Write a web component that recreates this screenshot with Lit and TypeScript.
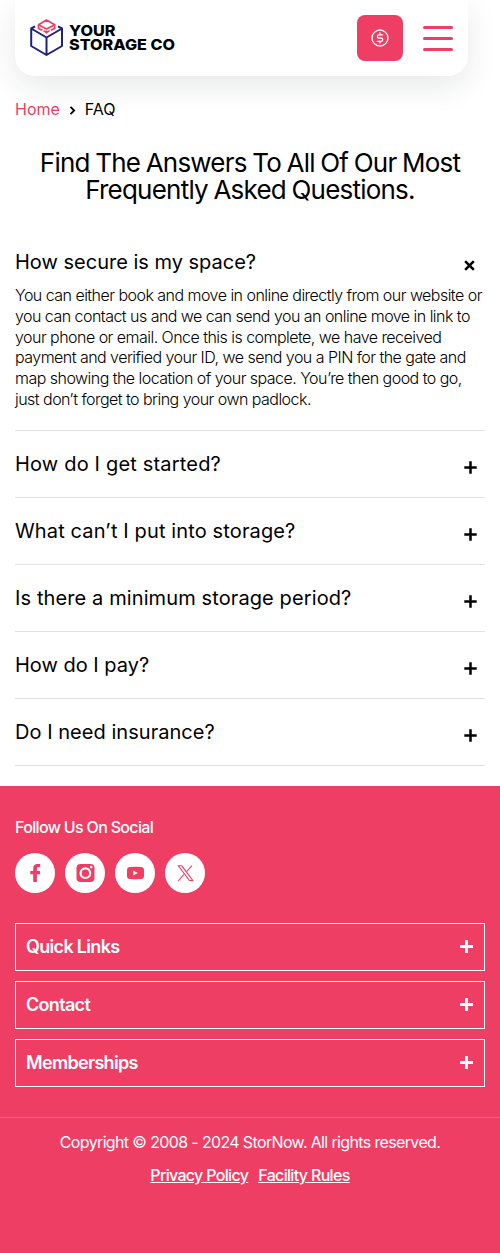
import { LitElement, html, css, svg } from "lit";
import { customElement, state } from "lit/decorators.js";
import { classMap } from "lit/directives/class-map.js";
import { styleMap } from "lit/directives/style-map.js";

const faqs = [
  {
    q: "How secure is my space?",
    tracking: 0,
    a: "You can either book and move in online directly from our website or you can contact us and we can send you an online move in link to your phone or email. Once this is complete, we have received payment and verified your ID, we send you a PIN for the gate and map showing the location of your space. You’re then good to go, just don’t forget to bring your own padlock.",
  },
  { q: "How do I get started?", tracking: 0.18, a: "" },
  { q: "What can’t I put into storage?", tracking: 0.13, a: "" },
  { q: "Is there a minimum storage period?", tracking: 0.11, a: "" },
  { q: "How do I pay?", tracking: 0, a: "" },
  { q: "Do I need insurance?", tracking: 0.04, a: "" },
];

const socials = [
  svg`<path d="M18.200 29v-7.700h-2.900v-3.300h2.900v-2.600c0-2.800 1.400-4.400 4-4.400h3v3.300h-1.800c-1 0-1.500.5-1.500 1.400v2.300h3.200v3.300h-3.200V29z"/>`,
  svg`<path d="M15.500 11h10a4 4 0 0 1 4 4v10a4 4 0 0 1-4 4h-10a4 4 0 0 1-4-4v-10a4 4 0 0 1 4-4z"/><circle cx="20.400" cy="20.200" r="4.800" fill="none" stroke="#fff" stroke-width="2.200"/><circle cx="26.200" cy="14.100" r="1.300" fill="#fff"/>`,
  svg`<path fill-rule="evenodd" d="M15 14q5.500-.6 11 0 3 .2 3 3v6q0 2.800-3 3-5.500.6-11 0-3-.2-3-3v-6q0-2.800 3-3zM18.300 17.500v5l4.400-2.500z"/>`,
  svg`<g fill="none" stroke="currentColor" stroke-width="1.1"><path d="M13.400 12.800h3.400l11 14.700h-3.400z"/><path d="M27 12.600l-5.500 6M13.300 27.800l6-6.800"/></g>`,
];

@customElement("app-root")
export class AppRoot extends LitElement {
  @state() private open = 0;

  static styles = css`
    :host {
      display: flex;
      flex-direction: column;
      min-height: 1253px;
      background: #fff;
      color: #000;
      font-family: Inter, sans-serif;
      overflow: hidden;
    }
    header {
      display: flex;
      align-items: center;
      box-sizing: border-box;
      width: 453px;
      height: 76px;
      margin-left: 15px;
      padding: 0 15px;
      background: #fff;
      border-radius: 0 0 20px 20px;
      box-shadow: 0 10px 30px rgba(29, 37, 45, 0.1);
    }
    .logo { display: block; margin-right: auto; }
    .price {
      display: grid;
      place-items: center;
      width: 46px;
      height: 46px;
      border-radius: 8px;
      background: #ef3e64;
    }
    .burger { display: grid; gap: 8px; width: 30px; margin-left: 20px; }
    .burger i { height: 3px; border-radius: 2px; background: #ef3e64; }
    nav {
      display: flex;
      align-items: center;
      height: 24px;
      padding: 21px 15px 0;
      font-size: 16px;
      line-height: 24px;
    }
    nav a { color: #ef3e64; }
    nav svg { margin: 2px 9px 0 9px; }
    h1 {
      margin: 28px 15px 0;
      font-size: 26px;
      font-weight: 400;
      line-height: 27px;
      letter-spacing: -0.78px;
      word-spacing: -1px;
      text-align: center;
    }
    .faqs { margin: 28px 15px 0; }
    .item { border-bottom: 1px solid #e2e2e2; }
    .q {
      display: flex;
      align-items: center;
      justify-content: space-between;
      height: 66px;
      font-size: 20px;
      cursor: pointer;
    }
    .q svg { margin: 8px 8px 0 0; }
    .open .q { height: 54px; padding-top: 7px; box-sizing: border-box; }
    .open .q svg { transform: rotate(45deg); margin-right: 9px; }
    .a {
      margin: 0;
      padding: 0 0 20px;
      font-size: 16px;
      font-weight: 300;
      line-height: 20.8px;
      letter-spacing: -0.53px;
    }
    footer { flex: 1; margin-top: 20px; background: #ef3e64; color: #fff; }
    .main { padding: 29px 15px 30px; }
    .follow { font-size: 16px; font-weight: 500; line-height: 24px; letter-spacing: -0.67px; }
    .social { display: flex; gap: 10px; margin: 14px 0 30px; }
    .social a {
      width: 40px;
      height: 40px;
      border-radius: 50%;
      background: #fff;
      color: #ef3e64;
    }
    .panels { display: grid; gap: 10px; }
    .panel {
      display: flex;
      align-items: center;
      justify-content: space-between;
      box-sizing: border-box;
      height: 48px;
      padding: 0 11px 0 10px;
      border: 1px solid #fff;
      font-size: 18px;
      font-weight: 600;
      letter-spacing: -0.68px;
    }
    .legal {
      border-top: 1px solid #f3607f;
      padding-top: 12px;
      text-align: center;
      font-size: 16px;
      line-height: 24px;
      letter-spacing: -0.64px;
    }
    .links {
      display: flex;
      justify-content: center;
      gap: 10px;
      margin-top: 9px;
      font-weight: 500;
      letter-spacing: -0.67px;
      text-decoration: underline;
    }
    svg { display: block; }
  `;

  render() {
    return html`
      <header>
        <svg class="logo" width="148" height="40" viewBox="0 0 148 40">
          <g fill="none" stroke-width="2" stroke-linejoin="round">
            <path stroke="#20207f" d="M5 8.400L1.200 10.500V28L16.500 37L32 28V10.500L28 8.400M1.200 10.500L16.500 19.500L32 10.500M16.500 19.500V37" />
            <path fill="#fff" stroke="#ef3e64" stroke-width="1.700" d="M16.500 2L24.700 6.800L16.500 11L8.500 6.800z" />
            <path stroke="#ef3e64" stroke-width="1.700" d="M8.500 6.800V10.500L12.500 12.300M24.700 6.800V10.500L20.700 12.300M13.500 12.600L16.500 14.600L19.700 12.600M16.500 12.500V15.500" />
          </g>
          <text font-size="15" font-weight="800" font-family="Inter, sans-serif">
            <tspan x="39" y="17.500" textLength="46.500" lengthAdjust="spacingAndGlyphs">YOUR</tspan>
            <tspan x="39" y="31.800" textLength="106" lengthAdjust="spacingAndGlyphs">STORAGE CO</tspan>
          </text>
        </svg>
        <a class="price">
          <svg width="18" height="18" viewBox="0 0 18 18" fill="none" stroke="#fff" stroke-width="1.300" stroke-linecap="round" stroke-linejoin="round">
            <circle cx="9" cy="9" r="8" />
            <path d="M11.600 5.800H8a1.500 1.500 0 0 0 0 3.200h2a1.500 1.500 0 0 1 0 3.300H6.400M9 4v1.800M9 12.300V14" />
          </svg>
        </a>
        <div class="burger"><i></i><i></i><i></i></div>
      </header>
      <nav>
        <a>Home</a>
        <svg width="7" height="9" viewBox="0 0 7 9" fill="none" stroke="#000" stroke-width="1.800"><path d="M1.500 .8L5.200 4.500L1.500 8.200" /></svg>
        <span>FAQ</span>
      </nav>
      <h1>Find The Answers To All Of Our Most Frequently Asked Questions.</h1>
      <section class="faqs">
        ${faqs.map((f, i) => html`
          <div class=${classMap({ item: true, open: i === this.open })}>
            <div class="q" @click=${() => (this.open = i)}>
              <span style=${styleMap({ letterSpacing: `${f.tracking}px` })}>${f.q}</span>
              <svg width="13" height="13" viewBox="0 0 13 13"><path stroke="#000" stroke-width="2.500" d="M6.500 .3V12.700M.3 6.500H12.700" /></svg>
            </div>
            ${i === this.open && f.a ? html`<p class="a">${f.a}</p>` : ""}
          </div>`)}
      </section>
      <footer>
        <div class="main">
          <div class="follow">Follow Us On Social</div>
          <div class="social">
            ${socials.map((s) => html`<a><svg width="40" height="40" viewBox="0 0 40 40" fill="currentColor">${s}</svg></a>`)}
          </div>
          <div class="panels">
            ${["Quick Links", "Contact", "Memberships"].map((t) => html`
              <div class="panel"><span>${t}</span>
                <svg width="13" height="13" viewBox="0 0 13 13"><path stroke="#fff" stroke-width="2.800" d="M6.500 0V13M0 6.500H13" /></svg>
              </div>`)}
          </div>
        </div>
        <div class="legal">
          <div>Copyright © 2008 - 2024 StorNow. All rights reserved.</div>
          <div class="links"><a>Privacy Policy</a><a>Facility Rules</a></div>
        </div>
      </footer>
    `;
  }
}
